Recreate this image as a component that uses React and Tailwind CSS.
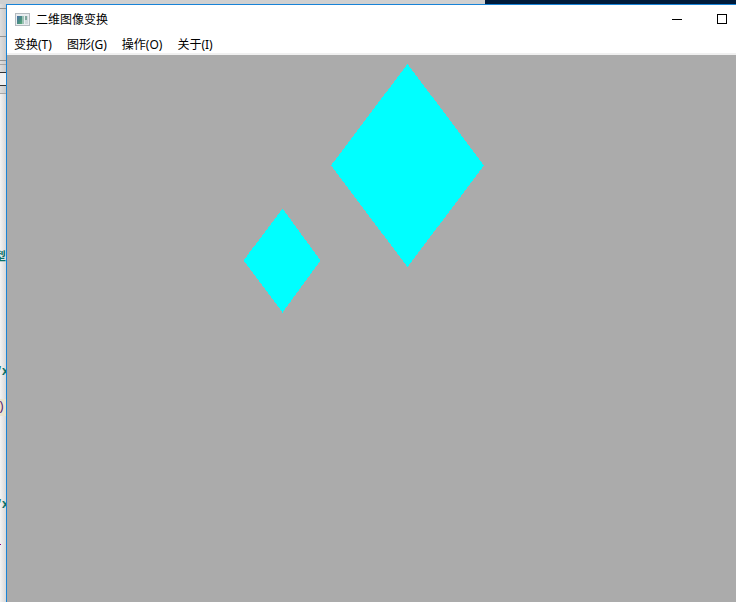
const menus = ["变换(T)", "图形(G)", "操作(O)", "关于(I)"];

function AppIcon() {
  return (
    <svg width="15" height="13" viewBox="0 0 15 13" shapeRendering="crispEdges" aria-hidden="true">
      <defs>
        <linearGradient id="pane" x1="0" y1="0" x2="1" y2="1">
          <stop offset="0" stopColor="#4a6fa8" />
          <stop offset="0.6" stopColor="#4a9080" />
          <stop offset="1" stopColor="#5cae78" />
        </linearGradient>
      </defs>
      <rect width="15" height="13" fill="#b4bbc0" />
      <rect x="1" y="1" width="13" height="11" fill="#e9edf0" />
      <rect x="2" y="3" width="5" height="8" fill="url(#pane)" />
      <rect x="7" y="3" width="2" height="8" fill="#9dc3b6" />
      <rect x="10" y="3" width="3" height="8" fill="#cfd8dc" />
      <rect x="10" y="3" width="2" height="4" fill="#7fa79d" />
    </svg>
  );
}

function EditorBehind() {
  return (
    <div
      aria-hidden="true"
      className="relative w-[6px] shrink-0 overflow-hidden bg-linear-to-r from-[#f3f3f3] to-[#d8d8d8] font-['Liberation_Mono','Noto_Sans_CJK_SC',monospace] text-[12px] leading-[14px] text-[#087068]"
    >
      <div className="h-[90px] bg-linear-to-r from-[#dedede] to-[#cacaca]">
        <svg width="6" height="90" shapeRendering="crispEdges">
          <path d="M0 4.5h6M0 32.5h6M0 56.5h6" stroke="#929292" />
          <path d="M0 60.5h6M0 89.5h6" stroke="#a5a5a5" />
          <path d="M0 69h6v12h-6z" fill="#f0f0f0" />
          <path d="M0 68.5h6M0 81.5h6" stroke="#333" />
        </svg>
      </div>
      <span className="absolute right-0 top-[247px] font-bold">型</span>
      <span className="absolute -right-[3px] top-[361px] font-bold">“x</span>
      <span className="absolute inset-x-0 top-[395px] h-[17px] bg-[#e9e5d0]" />
      <span className="absolute right-px top-[396px] text-[#542070]">)</span>
      <span className="absolute -right-[3px] top-[494px] font-bold">“x</span>
      <span className="absolute left-0 top-[540px] h-px w-px bg-[#800080]" />
    </div>
  );
}

export default function App() {
  return (
    <div className="flex min-h-screen flex-col overflow-hidden bg-white font-['Noto_Sans','Noto_Sans_CJK_SC',sans-serif] text-[12px] leading-[18px] text-black">
      <div className="flex h-1 shrink-0">
        <div className="w-[65.9%] bg-[#d0d0d0]" />
        <div className="flex-1 bg-[#001b3b]" />
      </div>
      <div className="flex flex-1">
        <EditorBehind />
        <main className="flex min-w-0 flex-1 flex-col border-l border-t border-[#1883d7]">
          <header className="flex h-7 items-center bg-white pl-2">
            <AppIcon />
            <h1 className="ml-[6px] flex-1 pt-[2px]">二维图像变换</h1>
            <button aria-label="最小化" className="flex h-full w-[46px] items-center justify-center">
              <svg width="10" height="10" shapeRendering="crispEdges">
                <path d="M0 5.5h10" stroke="#000" />
              </svg>
            </button>
            <button aria-label="最大化" className="flex h-full w-9 items-center justify-center pl-2">
              <svg width="10" height="10" shapeRendering="crispEdges">
                <path d="M.5.5h9v9h-9z" fill="none" stroke="#000" />
              </svg>
            </button>
          </header>
          <nav className="flex h-[22px] items-center gap-px border-b-2 border-[#f0f0f0] bg-white pt-1">
            {menus.map((label) => (
              <button key={label} className="px-[7px]">
                {label}
              </button>
            ))}
          </nav>
          <section className="flex-1 bg-[#ababab]">
            <svg width="500" height="300" shapeRendering="crispEdges" role="img" aria-label="图形">
              <path d="M400.500 9L477 110.500L400.500 212L324 110.500Z" fill="#0ff" />
              <path d="M275.500 153.500L313.500 205.500L275.500 257.500L236.500 205.500Z" fill="#0ff" />
            </svg>
          </section>
        </main>
      </div>
    </div>
  );
}
